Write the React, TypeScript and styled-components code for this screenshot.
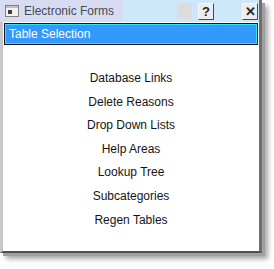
import React from "react";
import styled, { createGlobalStyle } from "styled-components";

const GlobalStyle = createGlobalStyle`
  html, body {
    margin: 0;
    padding: 0;
    background: #ffffff;
    font-family: "Liberation Sans", Arial, sans-serif;
  }
`;

const Page = styled.div`
  width: 274px;
  height: 269px;
  padding: 0 12px 16px 0;
  box-sizing: border-box;
`;

const Window = styled.div`
  width: 262px;
  height: 253px;
  box-sizing: border-box;
  display: flex;
  flex-direction: column;
  background: #ffffff;
  border-left: 3px solid #c8c8c8;
  border-right: 3px solid #6e6e6e;
  border-bottom: 2px solid #505050;
  box-shadow: 3px 3px 0 #a0a0a0, 6px 6px 5px rgba(0, 0, 0, 0.35);
`;

const TitleBar = styled.div`
  height: 22px;
  display: flex;
  align-items: center;
  background: #cde8fb;
  margin-left: -3px;
  padding-right: 1px;
`;

const TitleLeft = styled.div`
  display: flex;
  align-items: center;
  gap: 5px;
  height: 100%;
  padding: 0 6px 0 5px;
  width: 112px;
  background: #d8dcf2;
  white-space: nowrap;
`;

const TitleText = styled.span`
  font-size: 12px;
  color: #444a55;
`;

const Spacer = styled.div`
  flex: 1;
`;

const GraySquare = styled.div`
  width: 15px;
  height: 16px;
  background: #dcdcdc;
  margin-right: 6px;
`;

const CaptionButton = styled.button<{ $gap?: number }>`
  width: 16px;
  height: 17px;
  padding: 0;
  margin-right: ${(p) => p.$gap ?? 0}px;
  display: flex;
  align-items: center;
  justify-content: center;
  background: #ececec;
  border: 1px solid #f8f8f8;
  border-right-color: #4a4a4a;
  border-bottom-color: #4a4a4a;
  font-family: "Liberation Sans", Arial, sans-serif;
  font-weight: bold;
  font-size: 13px;
  color: #1a2a2a;
`;

const SelectionBar = styled.div`
  height: 22px;
  margin: 1px 1px 0 1px;
  box-sizing: border-box;
  display: flex;
  align-items: center;
  background: #3399ff;
  border: 1px solid #101820;
  box-shadow: inset 1px 1px 0 #33e0ff, inset -1px -1px 0 #33e0ff;
  padding-left: 4px;
  font-size: 12px;
  color: #ffffff;
`;

const List = styled.div`
  flex: 1;
  display: flex;
  flex-direction: column;
  align-items: center;
  padding-top: 26px;
  gap: 9.6px;
`;

const Item = styled.div`
  font-size: 12px;
  line-height: 14px;
  color: #141414;
`;

const AppIcon = () => (
  <svg width="14" height="12" viewBox="0 0 14 12">
    <rect x="0.5" y="0.5" width="13" height="11" fill="#f2f2f2" stroke="#808080" />
    <rect x="1" y="1" width="12" height="2" fill="#c0c0c0" />
    <rect x="3" y="5" width="4" height="4" fill="#404040" />
  </svg>
);

const items = [
  "Database Links",
  "Delete Reasons",
  "Drop Down Lists",
  "Help Areas",
  "Lookup Tree",
  "Subcategories",
  "Regen Tables",
];

export default function App() {
  return (
    <Page>
      <GlobalStyle />
      <Window>
        <TitleBar>
          <TitleLeft>
            <AppIcon />
            <TitleText>Electronic Forms</TitleText>
          </TitleLeft>
          <Spacer />
          <GraySquare />
          <CaptionButton $gap={28}>?</CaptionButton>
          <CaptionButton>✕</CaptionButton>
        </TitleBar>
        <SelectionBar>Table Selection</SelectionBar>
        <List>
          {items.map((t) => (
            <Item key={t}>{t}</Item>
          ))}
        </List>
      </Window>
    </Page>
  );
}
